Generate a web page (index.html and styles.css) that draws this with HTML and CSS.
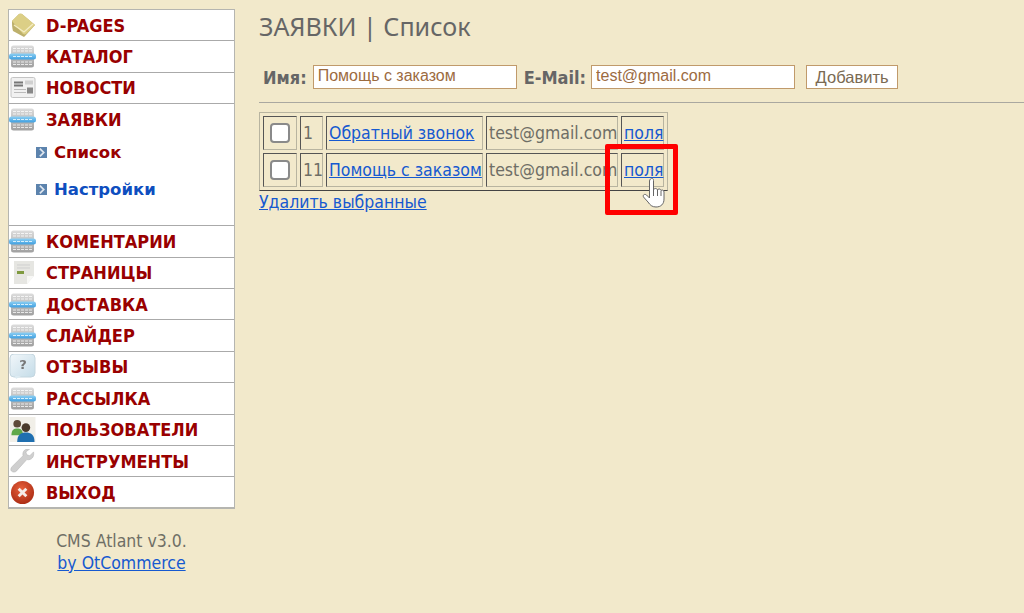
FILE: index.html
```html
<!DOCTYPE html>
<html lang="ru">
<head>
<meta charset="utf-8">
<title>ЗАЯВКИ | Список</title>
<link rel="stylesheet" href="styles.css">
</head>
<body>
<svg class="defs" width="0" height="0" aria-hidden="true">
  <defs>
    <linearGradient id="g-grey" x1="0" y1="0" x2="0" y2="1"><stop offset="0" stop-color="#dcdcdc"/><stop offset="1" stop-color="#a0a0a0"/></linearGradient>
    <linearGradient id="g-blue" x1="0" y1="0" x2="0" y2="1"><stop offset="0" stop-color="#8ed0f4"/><stop offset="1" stop-color="#3f9fe0"/></linearGradient>
    <radialGradient id="g-red" cx=".45" cy=".35" r=".7"><stop offset="0" stop-color="#e8603c"/><stop offset="1" stop-color="#a82a12"/></radialGradient>
    <linearGradient id="g-q" x1="0" y1="0" x2="1" y2="1"><stop offset="0" stop-color="#f2f7fa"/><stop offset="1" stop-color="#c4dce8"/></linearGradient>
    <symbol id="i-db" viewBox="0 0 27 24">
      <rect x="2" y="1" width="23" height="22" rx="2.5" fill="url(#g-grey)"/>
      <path d="M4 4h19M4 6.500h19M4 17.500h19M4 20h19" stroke="#fff" stroke-width="1" stroke-dasharray="3 1" opacity=".75"/>
      <rect x="0" y="9" width="27" height="6" rx="2.500" fill="url(#g-blue)"/>
      <path d="M4 12h19" stroke="#d8f0fc" stroke-width="1" stroke-dasharray="3 1"/>
    </symbol>
  </defs>
</svg>
<div class="page">
  <aside class="side">
    <nav class="menu">
      <a class="row" href="#"><svg class="ico" viewBox="0 0 27 25"><path d="M3 8 10 1c1-.5 2-.5 3 0l13 11-9 10-2 2L4 18c-1-3-1-7-1-10z" fill="#bdb06c"/><path d="M3 8 10 1c1-.5 2-.5 3 0l13 11-9 9c-1 .5-2 .5-3 0z" fill="#dccf86"/><path d="M5 12l10 7 9-8" fill="none" stroke="#f4edc4" stroke-width="1.300"/></svg><span>D-PAGES</span></a>
      <a class="row" href="#"><svg class="ico"><use href="#i-db"/></svg><span>КАТАЛОГ</span></a>
      <a class="row" href="#"><svg class="ico" viewBox="0 0 27 24"><rect x="2" y="2" width="24" height="20" rx="1.500" fill="#f1f1f1" stroke="#c4c4c4"/><path d="M5 7h9M5 10h9" stroke="#777" stroke-width="2"/><path d="M5 14h12M5 17h12" stroke="#bbb"/><rect x="18" y="12" width="6" height="6" fill="#888"/><rect x="16" y="5" width="8" height="4" fill="#d0d0d0"/></svg><span>НОВОСТИ</span></a>
      <div class="group">
        <a class="row plain" href="#"><svg class="ico"><use href="#i-db"/></svg><span>ЗАЯВКИ</span></a>
        <ul class="sub">
          <li><svg class="arr" viewBox="0 0 10 10"><rect width="10" height="10" fill="#5c83ad"/><path d="M3.500 1.500 7 5 3.500 8.500" fill="none" stroke="#dfe6ee" stroke-width="1.600"/></svg><a class="cur" href="#">Список</a></li>
          <li><svg class="arr" viewBox="0 0 10 10"><rect width="10" height="10" fill="#5c83ad"/><path d="M3.500 1.500 7 5 3.500 8.500" fill="none" stroke="#dfe6ee" stroke-width="1.600"/></svg><a href="#">Настройки</a></li>
        </ul>
      </div>
      <a class="row" href="#"><svg class="ico"><use href="#i-db"/></svg><span>КОМЕНТАРИИ</span></a>
      <a class="row" href="#"><svg class="ico" viewBox="0 0 27 25"><path d="M5 1h20v15l-7 8H5z" fill="#e6e6e2"/><path d="M18 24v-8h7z" fill="#f8f8f6"/><rect x="8" y="11" width="7" height="3" fill="#7f9a40"/><path d="M8 5h13M8 8h13" stroke="#cfcfcf"/></svg><span>СТРАНИЦЫ</span></a>
      <a class="row" href="#"><svg class="ico"><use href="#i-db"/></svg><span>ДОСТАВКА</span></a>
      <a class="row" href="#"><svg class="ico"><use href="#i-db"/></svg><span>СЛАЙДЕР</span></a>
      <a class="row" href="#"><svg class="ico" viewBox="0 0 27 25"><rect x="1" y="0" width="25" height="23" rx="4" fill="url(#g-q)" stroke="#c4d6df"/><path d="M6 22l1 3 5-3z" fill="#dcebf2"/><text x="14" y="15" class="q">?</text></svg><span>ОТЗЫВЫ</span></a>
      <a class="row" href="#"><svg class="ico"><use href="#i-db"/></svg><span>РАССЫЛКА</span></a>
      <a class="row" href="#"><svg class="ico" viewBox="0 0 27 26"><rect width="27" height="26" fill="#f1efe8"/><circle cx="8" cy="7" r="4" fill="#5f4a38"/><path d="M2 19c0-6 3-7 6-7s6 1 6 7z" fill="#5fa84a"/><circle cx="17" cy="11" r="4.500" fill="#4a3a2c"/><path d="M8 26c0-8 4-10 9-10s9 2 9 10z" fill="#1f6fb0"/></svg><span>ПОЛЬЗОВАТЕЛИ</span></a>
      <a class="row" href="#"><svg class="ico" viewBox="0 0 27 26"><path d="M25 3l-4 4-3-1-1-3 4-3c-4-1-8 2-7 7L3 18c-2 2-2 4-1 5s4 2 6-1l10-11c5 1 8-3 7-8z" fill="#cfcfcf" stroke="#b0b0b0" stroke-width=".5"/></svg><span>ИНСТРУМЕНТЫ</span></a>
      <a class="row last" href="#"><svg class="ico" viewBox="0 0 27 26"><circle cx="13.500" cy="13" r="12" fill="url(#g-red)"/><path d="M9.500 9l8 8m0-8-8 8" stroke="#f6ece8" stroke-width="3"/></svg><span>ВЫХОД</span></a>
    </nav>
    <div class="credit">CMS Atlant v3.0.<br><a href="#">by OtCommerce</a></div>
  </aside>
  <main class="main">
    <h1 class="title">ЗАЯВКИ | Список</h1>
    <form class="addform">
      <label class="lbl" for="fn">Имя:</label>
      <input class="inp" id="fn" type="text" value="Помощь с заказом">
      <label class="lbl" for="fm">E-Mail:</label>
      <input class="inp" id="fm" type="text" value="test@gmail.com">
      <button class="btn" type="button">Добавить</button>
    </form>
    <div class="rule"></div>
    <div class="listing">
      <table class="tbl">
        <colgroup><col class="w-check"><col class="w-num"><col class="w-name"><col class="w-mail"><col class="w-f"></colgroup>
        <tr>
          <td><span class="chk"></span></td>
          <td>1</td>
          <td><a href="#">Обратный звонок</a></td>
          <td>test@gmail.com</td>
          <td><a href="#">поля</a></td>
        </tr>
        <tr>
          <td><span class="chk"></span></td>
          <td>11</td>
          <td><a href="#">Помощь с заказом</a></td>
          <td>test@gmail.com</td>
          <td><a href="#">поля</a></td>
        </tr>
      </table>
      <a class="del" href="#">Удалить выбранные</a>
      <div class="mark"></div>
      <svg class="hand" viewBox="0 0 24 32">
        <path d="M8 2c1.500-1.500 3-.5 3 1.500V13c.5-2 3.500-2 4 0 .5-1.500 3-1.500 3.500.5 1-1 3-.5 3 1.500v7c0 5-3 8-8 8-4 0-6-2-8-5L1 20c-1-2 1-3.500 3-2l3 3V4c0-1 .5-1.500 1-2z" fill="#fff" stroke="#666" stroke-width="1" stroke-linejoin="round"/>
        <path d="M11 13v6M15 13v6M18.500 14v5" stroke="#666" stroke-width="1"/>
      </svg>
    </div>
  </main>
</div>
</body>
</html>
```
FILE: styles.css
```css
* { box-sizing: border-box; }
html, body { margin: 0; height: 100%; }
body {
  background: #f2e9cb;
  color: #666;
  font-family: "DejaVu Sans", sans-serif;
  font-stretch: condensed;
  overflow: hidden;
}
.defs { position: absolute; }
.page { display: flex; height: 613px; }
.side { width: 227px; margin: 9px 0 0 8px; flex: none; }
.menu {
  background: #fff;
  border: 1px solid #b5b5b0;
  border-bottom-width: 2px;
}
.row {
  display: flex;
  align-items: center;
  height: 31.4px;
  border-bottom: 1px solid #aaa;
  color: #990000;
  font: bold 18px "DejaVu Sans", sans-serif;
  font-stretch: condensed;
  text-decoration: none;
}
.row.last { border-bottom: 0; height: 29.5px; }
.row.plain { border-bottom: 0; }
.ico { width: 27px; height: 25px; margin-right: 10px; flex: none; filter: blur(.35px); }
.q { font: bold 13px "DejaVu Sans", sans-serif; fill: #777; text-anchor: middle; }
.group { height: 122px; border-bottom: 1px solid #aaa; }
.sub { list-style: none; margin: 0; padding: 0 0 0 27px; }
.sub li { display: flex; align-items: center; height: 40px; }
.sub li:first-child { height: 34px; }
.arr { width: 11px; height: 11px; margin-right: 7px; flex: none; }
.sub a {
  color: #0e4ebf;
  font: bold 16.500px "DejaVu Sans", sans-serif;
  text-decoration: none;
}
.sub a.cur { color: #990000; }
.credit {
  margin-top: 21px;
  text-align: center;
  font-size: 17.500px;
  line-height: 22px;
  color: #6f6f66;
}
.credit a { color: #1659d0; }
.main { flex: 1; padding: 0 0 0 24px; min-width: 0; }
.title {
  margin: 9px 0 0;
  font-family: "Noto Sans", sans-serif;
  font-stretch: normal;
  font-weight: 400;
  font-size: 25.100px;
  line-height: 34px;
  color: #666;
}
.addform {
  display: flex;
  align-items: center;
  margin: 21px 0 0 4px;
  height: 26px;
}
.lbl { font: bold 18px "DejaVu Sans", sans-serif; font-stretch: condensed; color: #666; margin-right: 5px; }
.lbl:first-child { margin-right: 6px; }
.inp {
  width: 204px;
  height: 24px;
  margin-right: 7px;
  padding: 0 4px 2px;
  border: 1px solid #c09a6b;
  background: #fff;
  color: #9c6b3f;
  font: 16px "Liberation Sans", sans-serif;
  border-radius: 0;
}
.btn {
  width: 92px;
  height: 24px;
  margin-left: 4px;
  padding: 0;
  border: 1px solid #c09a6b;
  background: #fff;
  color: #7a6a52;
  font: 16.500px "Liberation Sans", sans-serif;
}
.rule { height: 1px; background: #aaa8a0; margin-top: 12px; }
.listing { position: relative; margin-top: 9px; }
.tbl {
  border-collapse: separate;
  border-spacing: 3px;
  table-layout: fixed;
  width: 409px;
  border: 1px solid;
  border-color: #b8b4a0 #b8b4a0 #444 #b8b4a0;
  font-size: 17.500px;
}
.w-check { width: 34px; }
.w-num { width: 23px; }
.w-name { width: 157px; }
.w-mail { width: 132px; }
.w-f { width: 43px; }
.tbl td {
  height: 34px;
  padding: 0 2px;
  border: 1px solid;
  border-color: #555 #b8b4a0 #b8b4a0 #555;
  white-space: nowrap;
  color: #6e6e66;
}
.tbl a, .del { color: #1659d0; }
.chk {
  display: block;
  width: 20px;
  height: 20px;
  margin: 0 auto;
  background: #fff;
  border: 2px solid #8a8a8a;
  border-radius: 4px;
}
.del { display: block; font-size: 17.500px; line-height: 22px; }
.mark {
  position: absolute;
  left: 346px;
  top: 32px;
  width: 73px;
  height: 71px;
  border: 5px solid #f00;
  border-radius: 2px;
}
.hand { position: absolute; left: 383px; top: 65px; width: 25px; height: 32px; }
```
